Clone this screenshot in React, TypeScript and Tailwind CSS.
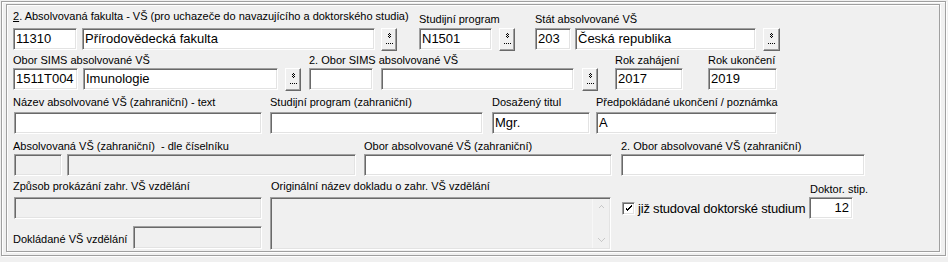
import React from "react";

type BoxProps = {
  className: string;
  h?: string;
  disabled?: boolean;
  right?: boolean;
  children?: React.ReactNode;
};

function Box({ className, h = "h-[22px]", disabled, right, children }: BoxProps) {
  return (
    <div
      className={`${className} ${h} shrink-0 border border-t-[#a0a0a0] border-l-[#a0a0a0] border-r-white border-b-white shadow-[inset_1px_1px_0_#696969,inset_-1px_-1px_0_#e3e3e3] ${
        disabled ? "bg-[#f0f0f0]" : "bg-white"
      } flex items-center text-[13px] leading-[15px] whitespace-nowrap overflow-hidden pb-[1px] ${
        right ? "justify-end pr-[3px]" : "pl-[2px]"
      }`}
    >
      {children}
    </div>
  );
}

function Btn({ className = "", w = "w-[16px]" }: { className?: string; w?: string }) {
  return (
    <div
      className={`${w} h-[23px] shrink-0 bg-[#f0f0f0] border border-t-white border-l-white border-r-[#696969] border-b-[#696969] shadow-[inset_-1px_-1px_0_#a0a0a0] flex justify-center pt-[4px] ${className}`}
    >
      <svg width="7" height="12" viewBox="0 0 7 12" shapeRendering="crispEdges">
        <g fill="#000">
          <rect x="3" y="0" width="1" height="1" />
          <rect x="2" y="1" width="1" height="1" />
          <rect x="4" y="1" width="1" height="1" />
          <rect x="3" y="2" width="1" height="1" />
          <rect x="2" y="3" width="1" height="1" />
          <rect x="4" y="3" width="1" height="1" />
          <rect x="3" y="4" width="1" height="1" />
          <rect x="0" y="10" width="1" height="1" />
          <rect x="2" y="10" width="1" height="1" />
          <rect x="4" y="10" width="1" height="1" />
          <rect x="6" y="10" width="1" height="1" />
        </g>
      </svg>
    </div>
  );
}

function Label({ className = "", children }: { className?: string; children: React.ReactNode }) {
  return <div className={`text-[11px] leading-[13px] whitespace-pre ${className}`}>{children}</div>;
}

export default function App() {
  return (
    <div className="w-[948px] h-[262px] bg-[#f0f0f0] overflow-hidden pt-[1px] pl-[1px] font-['Liberation_Sans',Arial,sans-serif] text-black">
      <div className="w-[945px] h-[255px] border border-[#a0a0a0] shadow-[inset_1px_1px_0_#fff,1px_1px_0_#fff] pt-[2px] pl-[4px]">
        <div className="w-[934px] h-[248px] border border-[#a0a0a0] shadow-[inset_1px_1px_0_#fff,1px_1px_0_#fff] pl-[6px] pt-[5px]">
          {/* Row 1 */}
          <div className="flex h-[40px] items-start">
            <div className="flex flex-col w-[384px] shrink-0">
              <Label className="h-[18px]">
                <u>2</u>. Absolvovaná fakulta - VŠ (pro uchazeče do navazujícího a doktorského studia)
              </Label>
              <div className="flex items-start">
                <Box className="w-[64px]">11310</Box>
                <Box className="w-[293px] ml-[5px]">Přírodovědecká fakulta</Box>
                <Btn className="ml-[6px]" />
              </div>
            </div>
            <div className="flex flex-col ml-[22px] shrink-0">
              <Label className="h-[18px] pt-[3px]">Studijní program</Label>
              <div className="flex items-start">
                <Box className="w-[73px]">N1501</Box>
                <Btn className="ml-[7px]" />
              </div>
            </div>
            <div className="flex flex-col ml-[20px] shrink-0">
              <Label className="h-[18px] pt-[3px]">Stát absolvované VŠ</Label>
              <div className="flex items-start">
                <Box className="w-[36px]">203</Box>
                <Box className="w-[181px] ml-[4px]">Česká republika</Box>
                <Btn className="ml-[7px]" w="w-[17px]" />
              </div>
            </div>
          </div>

          {/* Row 2 */}
          <div className="flex h-[40px] items-start">
            <div className="flex flex-col w-[288px] shrink-0">
              <Label className="h-[18px] pt-[4px]">Obor SIMS absolvované VŠ</Label>
              <div className="flex items-start">
                <Box className="w-[65px]">1511T004</Box>
                <Box className="w-[195px] ml-[5px]">Imunologie</Box>
                <Btn className="ml-[7px]" />
              </div>
            </div>
            <div className="flex flex-col w-[289px] ml-[8px] shrink-0">
              <Label className="h-[18px] pt-[4px]">2. Obor SIMS absolvované VŠ</Label>
              <div className="flex items-start">
                <Box className="w-[64px]" />
                <Box className="w-[193px] ml-[8px]" />
                <Btn className="ml-[8px]" />
              </div>
            </div>
            <div className="flex flex-col ml-[17px] shrink-0">
              <Label className="h-[18px] pt-[4px]">Rok zahájení</Label>
              <Box className="w-[68px]">2017</Box>
            </div>
            <div className="flex flex-col ml-[25px] shrink-0">
              <Label className="h-[18px] pt-[4px]">Rok ukončení</Label>
              <Box className="w-[69px]">2019</Box>
            </div>
          </div>

          {/* Row 3 */}
          <div className="flex h-[44px] items-start">
            <div className="flex flex-col w-[249px] shrink-0">
              <Label className="h-[22px] pt-[6px]">Název absolvované VŠ (zahraniční) - text</Label>
              <Box className="w-[248px] ml-[1px]" />
            </div>
            <div className="flex flex-col ml-[8px] shrink-0">
              <Label className="h-[22px] pt-[6px]">Studijní program (zahraniční)</Label>
              <Box className="w-[213px]" />
            </div>
            <div className="flex flex-col ml-[9px] shrink-0">
              <Label className="h-[22px] pt-[6px]">Dosažený titul</Label>
              <Box className="w-[98px]">Mgr.</Box>
            </div>
            <div className="flex flex-col ml-[6px] shrink-0">
              <Label className="h-[22px] pt-[6px]">Předpokládané ukončení / poznámka</Label>
              <Box className="w-[181px]">A</Box>
            </div>
          </div>

          {/* Row 4 */}
          <div className="flex h-[42px] items-start">
            <div className="flex flex-col w-[343px] shrink-0">
              <Label className="h-[20px] pt-[6px]">Absolvovaná VŠ (zahraniční)  - dle číselníku</Label>
              <div className="flex items-start">
                <Box className="w-[48px] ml-[1px]" disabled />
                <Box className="w-[289px] ml-[5px]" disabled />
              </div>
            </div>
            <div className="flex flex-col ml-[8px] shrink-0">
              <Label className="h-[20px] pt-[6px]">Obor absolvované VŠ (zahraniční)</Label>
              <Box className="w-[248px]" />
            </div>
            <div className="flex flex-col ml-[9px] shrink-0">
              <Label className="h-[20px] pt-[6px]">2. Obor absolvované VŠ (zahraniční)</Label>
              <Box className="w-[244px]" />
            </div>
          </div>

          {/* Row 5 */}
          <div className="flex items-start">
            <div className="flex flex-col w-[249px] shrink-0">
              <Label className="h-[21px] pt-[4px]">Způsob prokázání zahr. VŠ vzdělání</Label>
              <Box className="w-[248px] ml-[1px]" disabled />
              <div className="flex items-end mt-[7px] justify-between">
                <Label className="mb-[3px]">Dokládané VŠ vzdělání</Label>
                <Box className="w-[129px]" h="h-[23px]" disabled />
              </div>
            </div>
            <div className="flex flex-col ml-[8px] shrink-0">
              <Label className="h-[21px] pt-[4px] pl-[1px]">Originální název dokladu o zahr. VŠ vzdělání</Label>
              <div className="w-[341px] h-[53px] border border-t-[#a0a0a0] border-l-[#a0a0a0] border-r-white border-b-white shadow-[inset_1px_1px_0_#696969,inset_-1px_-1px_0_#e3e3e3] bg-[#f0f0f0] flex justify-end p-[1px]">
                <div className="w-[17px] h-full border-l border-[#f7f7f7] flex flex-col justify-between items-center py-[6px]">
                  <svg width="7" height="4" viewBox="0 0 7 4" shapeRendering="crispEdges">
                    <path d="M0.5 3.5 L3.5 0.5 L6.5 3.5" fill="none" stroke="#c8c8c8" strokeWidth="1" />
                  </svg>
                  <svg width="7" height="4" viewBox="0 0 7 4" shapeRendering="crispEdges">
                    <path d="M0.5 0.5 L3.5 3.5 L6.5 0.5" fill="none" stroke="#c8c8c8" strokeWidth="1" />
                  </svg>
                </div>
              </div>
            </div>
            <div className="flex items-end ml-[11px] shrink-0">
              <div className="flex items-center h-[22px]">
                <div className="w-[13px] h-[13px] shrink-0 bg-white border border-t-[#a0a0a0] border-l-[#a0a0a0] border-r-white border-b-white shadow-[inset_1px_1px_0_#696969,inset_-1px_-1px_0_#e3e3e3] flex items-center justify-center">
                  <svg width="7" height="7" viewBox="0 0 7 7" shapeRendering="crispEdges">
                    <path d="M0 2h1v3h1v1h1v-1h1v-1h1v-1h1v-1h1v-2h-1v1h-1v1h-1v1h-1v1h-1v-1h-1v-1z" fill="#000" />
                  </svg>
                </div>
                <div className="w-[168px] ml-[3px] text-[13px] leading-[15px] whitespace-nowrap tracking-[-0.2px]">
                  již studoval doktorské studium
                </div>
              </div>
              <div className="flex flex-col ml-[3px]">
                <Label className="h-[21px] pt-[7px] pl-[1px]">Doktor. stip.</Label>
                <Box className="w-[44px]" right>
                  12
                </Box>
              </div>
            </div>
          </div>
        </div>
      </div>
    </div>
  );
}
